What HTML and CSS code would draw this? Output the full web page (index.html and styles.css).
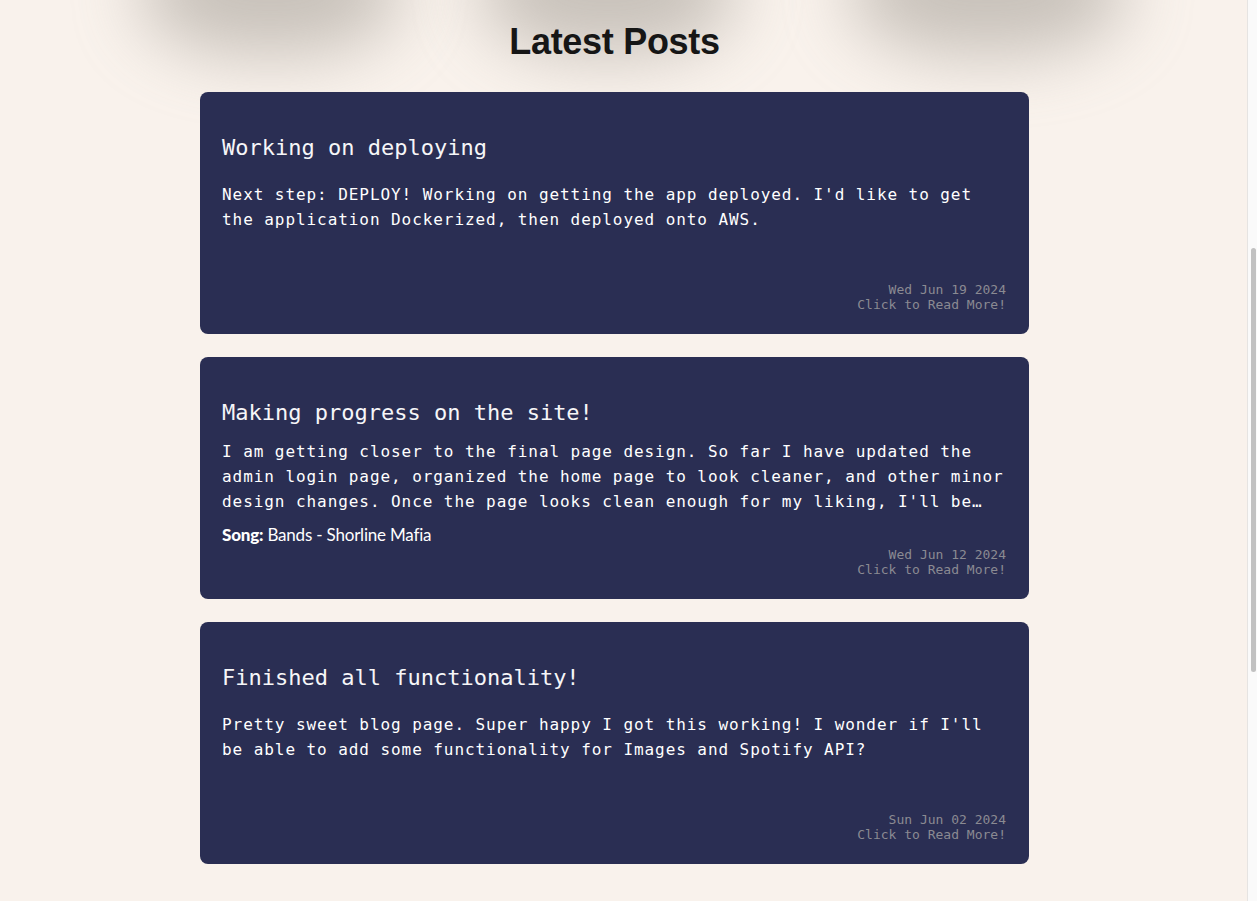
FILE: index.html
```html
<!DOCTYPE html>
<html lang="en">
<head>
<meta charset="utf-8">
<title>Latest Posts</title>
<link rel="stylesheet" href="styles.css">
</head>
<body>
<div class="page">
  <main class="content">
    <header class="hero">
      <div class="glows" aria-hidden="true">
        <span class="glow glow-1"></span>
        <span class="glow glow-2"></span>
        <span class="glow glow-3"></span>
      </div>
      <h1 class="hero-title">Latest Posts</h1>
    </header>
    <section class="posts">
      <article class="post">
        <h2 class="post-title">Working on deploying</h2>
        <p class="post-body">Next step: DEPLOY! Working on getting the app deployed. I'd like to get the application Dockerized, then deployed onto AWS.</p>
        <footer class="post-meta">
          <span>Wed Jun 19 2024</span>
          <span>Click to Read More!</span>
        </footer>
      </article>
      <article class="post post--song">
        <h2 class="post-title">Making progress on the site!</h2>
        <p class="post-body">I am getting closer to the final page design. So far I have updated the admin login page, organized the home page to look cleaner, and other minor design changes. Once the page looks clean enough for my liking, I'll be…</p>
        <p class="post-song"><strong>Song:</strong> Bands - Shorline Mafia</p>
        <footer class="post-meta">
          <span>Wed Jun 12 2024</span>
          <span>Click to Read More!</span>
        </footer>
      </article>
      <article class="post">
        <h2 class="post-title">Finished all functionality!</h2>
        <p class="post-body">Pretty sweet blog page. Super happy I got this working! I wonder if I'll be able to add some functionality for Images and Spotify API?</p>
        <footer class="post-meta">
          <span>Sun Jun 02 2024</span>
          <span>Click to Read More!</span>
        </footer>
      </article>
    </section>
  </main>
  <div class="scrollbar" aria-hidden="true">
    <div class="scrollbar-thumb"></div>
  </div>
</div>
</body>
</html>
```
FILE: styles.css
```css
* { box-sizing: border-box; }

html, body {
  margin: 0;
  padding: 0;
  height: 100%;
}

body {
  background: #f9f2ec;
  font-family: "Liberation Sans", Arial, sans-serif;
  overflow: hidden;
}

.page {
  display: flex;
  height: 901px;
}

.content {
  flex: 1;
  display: flex;
  flex-direction: column;
  align-items: center;
  padding-right: 18px;
  min-width: 0;
}

.hero {
  position: relative;
  width: 100%;
  display: flex;
  justify-content: center;
  padding-top: 21px;
  margin-bottom: 30px;
}

.glows {
  position: absolute;
  inset: 0 0 auto 0;
  height: 0;
}

.glow {
  position: absolute;
  top: -75px;
  height: 130px;
  border-radius: 45%;
  background: #aaa49c;
  filter: blur(34px);
  opacity: 0.62;
}

.glow-1 { left: 140px; width: 260px; }
.glow-2 { left: 480px; width: 255px; }
.glow-3 { left: 850px; width: 275px; }

.hero-title {
  position: relative;
  margin: 0;
  font-size: 36px;
  line-height: 41px;
  font-weight: 700;
  color: #161616;
  letter-spacing: -0.3px;
}

.posts {
  position: relative;
  z-index: 1;
  width: 829px;
  display: flex;
  flex-direction: column;
  gap: 23px;
}

.post {
  height: 242px;
  background: #2a2e53;
  border-radius: 8px;
  padding: 22px 23px 22px 22px;
  display: flex;
  flex-direction: column;
  color: #ffffff;
  font-family: "DejaVu Sans Mono", "Liberation Mono", monospace;
}

.post-title {
  margin: 21px 0 0;
  font-size: 22px;
  line-height: 26px;
  font-weight: 400;
  color: #f6f6f8;
}

.post-body {
  margin: 21px 0 0;
  font-size: 16px;
  line-height: 25px;
  letter-spacing: 0.93px;
  color: #ffffff;
}

.post--song .post-body {
  margin-top: 13px;
}

.post-song {
  margin: 11px 0 0;
  font-family: Lato, "Noto Sans", sans-serif;
  font-size: 17px;
  line-height: 20px;
  color: #ffffff;
  letter-spacing: -0.2px;
}

.post-song strong {
  font-weight: 900;
}

.post-meta {
  margin-top: auto;
  display: flex;
  flex-direction: column;
  align-items: flex-end;
  font-size: 13px;
  line-height: 15px;
  color: #8a8a92;
}

.scrollbar {
  width: 10px;
  flex: none;
  background: #fafafa;
  border-left: 1px solid #e6e4e2;
  padding: 248px 1px 0 3px;
}

.scrollbar-thumb {
  height: 424px;
  background: #c1c1c1;
  border-radius: 4px;
}
```
